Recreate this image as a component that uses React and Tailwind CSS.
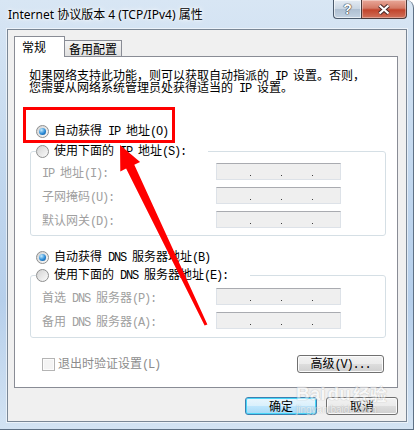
import React from 'react'

// ascii runs look like SimSun's half-width latin: a narrow mono face
function T({ s }) {
  return (
    <span>
      {s.split(/([\x20-\x7e]+)/).map((p, i) =>
        /^[\x20-\x7e]+$/.test(p)
          ? <span key={i} className="whitespace-pre font-['Liberation_Mono',monospace] text-[12px] tracking-[-1.2px]">{p}</span>
          : p
      )}
    </span>
  )
}

function Radio({ on }) {
  return (
    <span className="w-[13px] h-[13px] shrink-0 rounded-full border border-[#8e8f8f] bg-[linear-gradient(135deg,#d2d2d2,#fbfbfb)] flex items-center justify-center">
      {on && <span className="w-[7px] h-[7px] rounded-full bg-[radial-gradient(circle_at_35%_30%,#c6ebfd,#2b8bd6_55%,#0c4a8c)]" />}
    </span>
  )
}

function IpBox() {
  return (
    <div className="w-[125px] h-[17px] shrink-0 bg-[#efefef] border border-[#dde2e8] border-t-[#a9abb0] flex items-end pb-[3px] pl-[33px] gap-[30px]">
      <span className="w-[1px] h-[1px] bg-[#404040]" />
      <span className="w-[1px] h-[1px] bg-[#404040]" />
      <span className="w-[1px] h-[1px] bg-[#404040]" />
    </div>
  )
}

function Field({ label }) {
  return (
    <div className="flex items-center h-[17px]">
      <span className="w-[174px] pt-[2px] text-[#a0a0a0]"><T s={label} /></span>
      <IpBox />
    </div>
  )
}

const grayBtn = "rounded-[3px] border border-[#707070] bg-[linear-gradient(#f2f2f2_0%,#ebebeb_50%,#dddddd_51%,#cfcfcf_100%)] shadow-[inset_0_0_0_1px_#fbfbfb] flex items-center justify-center"

export default function App() {
  return (
    <div className="w-[414px] h-[430px] relative overflow-hidden flex flex-col pl-[7px] pr-[6px] pb-[7px] border-r border-b border-[#5f7185] rounded-tr-[8px] bg-[linear-gradient(#d8e6f4,#c0d6ee_45%,#b6cfeb_70%,#d3e3f3)] font-['Noto_Sans_CJK_SC',sans-serif] text-[12px] text-black">
      {/* title bar */}
      <div className="h-[29px] shrink-0 flex items-start">
        <div className="pl-[1px] pt-[7px] leading-[16px] font-['Noto_Sans','Noto_Sans_CJK_SC',sans-serif] [text-shadow:0_0_6px_#fff,0_0_3px_#fff]">
          Internet 协议版本 4 (TCP/IPv4) 属性
        </div>
        <div className="ml-auto flex">
          <div className="w-[28px] h-[19px] rounded-bl-[4px] border border-t-0 border-r-0 border-[#4b5a6c] bg-[linear-gradient(#e4ebf3,#c9d5e2_50%,#aebfd1_51%,#c3d2e2)] shadow-[inset_0_0_0_1px_rgba(255,255,255,0.6)] flex items-center justify-center">
            <span className="font-['Liberation_Sans',sans-serif] font-bold text-[14px] leading-[14px] text-white [text-shadow:0_0_1px_#333,0_0_1px_#333,0_0_1px_#333]">?</span>
          </div>
          <div className="w-[46px] h-[19px] rounded-br-[4px] border border-t-0 border-[#4b3a3a] bg-[linear-gradient(#e9a899,#d47a66_45%,#c2442c_55%,#d0715a)] shadow-[inset_0_0_0_1px_rgba(255,255,255,0.35)] flex items-center justify-center">
            <svg width="14" height="11" viewBox="0 0 14 11">
              <path d="M2.5 1.5 L11.5 9.5 M11.5 1.5 L2.5 9.5" stroke="#4a2b2b" strokeWidth="4.2" />
              <path d="M2.5 1.5 L11.5 9.5 M11.5 1.5 L2.5 9.5" stroke="#fff" strokeWidth="2.2" />
            </svg>
          </div>
        </div>
      </div>

      {/* client area */}
      <div className="flex-1 flex flex-col border border-[#7a8796] bg-[#f0f0f0] pl-[6px] pr-[8px] pt-[6px] shadow-[0_0_0_1px_rgba(255,255,255,0.55)]">
        <div className="flex items-end h-[20px]">
          <div className="relative z-10 -mb-px h-[21px] w-[51px] bg-white border border-b-0 border-[#898c95] pl-[7px] flex items-center">常规</div>
          <div className="h-[16px] w-[57px] border border-l-0 border-b-0 border-[#898c95] bg-[linear-gradient(#f4f4f4,#e0e0e0)] pl-[4px] flex items-center">备用配置</div>
        </div>

        <div className="w-[384px] h-[332px] shrink-0 bg-white border border-[#898c95] flex flex-col">
          <div className="pt-[12px] pl-[14px] leading-[12px]">
            <div className="h-[12px]"><T s="如果网络支持此功能，则可以获取自动指派的 IP 设置。否则，" /></div>
            <div className="h-[12px]"><T s="您需要从网络系统管理员处获得适当的 IP 设置。" /></div>
          </div>

          <div className="mt-[30px] ml-[21px] h-[16px] flex items-center gap-[5px]">
            <Radio on />
            <T s="自动获得 IP 地址(O)" />
          </div>

          <fieldset className="mt-[4px] ml-[15px] w-[356px] border border-[#d5dfe5] rounded-[3px] pb-[7px]">
            <legend className="ml-[5px] w-[172px]">
              <div className="h-[16px] flex items-center gap-[5px]">
                <Radio />
                <T s="使用下面的 IP 地址(S):" />
              </div>
            </legend>
            <div className="mt-[4px] pl-[11px] flex flex-col gap-[7px]">
              <Field label="IP 地址(I):" />
              <Field label="子网掩码(U):" />
              <Field label="默认网关(D):" />
            </div>
          </fieldset>

          <div className="mt-[13px] ml-[21px] h-[16px] flex items-center gap-[5px]">
            <Radio on />
            <T s="自动获得 DNS 服务器地址(B)" />
          </div>

          <fieldset className="mt-[2px] ml-[15px] w-[356px] border border-[#d5dfe5] rounded-[3px] pb-[8px]">
            <legend className="ml-[5px] w-[214px]">
              <div className="h-[16px] flex items-center gap-[5px]">
                <Radio />
                <T s="使用下面的 DNS 服务器地址(E):" />
              </div>
            </legend>
            <div className="mt-[5px] pl-[11px] flex flex-col gap-[7px]">
              <Field label="首选 DNS 服务器(P):" />
              <Field label="备用 DNS 服务器(A):" />
            </div>
          </fieldset>

          <div className="mt-[17px] h-[18px] flex items-center pl-[27px] pr-[13px]">
            <span className="w-[13px] h-[13px] border border-[#b4b4b4] bg-[#f4f4f4] shadow-[inset_0_0_0_1px_#fcfcfc]" />
            <span className="ml-[3px] text-[#8c8c8c]"><T s="退出时验证设置(L)" /></span>
            <div className={"ml-auto w-[87px] h-[18px] " + grayBtn}><T s="高级(V)..." /></div>
          </div>
        </div>

        <div className="mt-[9px] flex justify-end gap-[9px]">
          <div className="w-[72px] h-[18px] rounded-[3px] border border-[#3c7fb1] bg-[linear-gradient(#eaf6fd_0%,#d9f0fc_50%,#bee6fd_51%,#a7d9f5_100%)] shadow-[inset_0_0_0_1px_#48d6f8] flex items-center justify-center">确定</div>
          <div className={"w-[72px] h-[18px] " + grayBtn}>取消</div>
        </div>
      </div>

      {/* annotation: red box + arrow */}
      <div className="absolute left-[23px] top-[107px] w-[152px] h-[36px] border-[3px] border-[#ff0000]" />
      <svg className="absolute left-0 top-0 pointer-events-none" width="414" height="430" viewBox="0 0 414 430">
        <polygon points="120,145 140.1,162 134.3,164.8 207.4,324.4 204.6,325.6 126.1,168.6 120.3,171.4" fill="#ff0000" />
      </svg>

      {/* watermark */}
      <div className="absolute left-[296px] top-[384px] flex flex-col items-start opacity-50 pointer-events-none">
        <div className="flex items-end gap-[2px] font-['Liberation_Sans',sans-serif] font-bold text-[19px] leading-[20px] text-white [text-shadow:0_0_1px_#9a9a9a,0_0_1px_#9a9a9a]">
          <span>Bai</span><span>du</span><span className="font-['Noto_Sans_CJK_SC',sans-serif] text-[17px]">经验</span>
        </div>
        <div className="text-[10px] leading-[11px] text-white font-['Liberation_Sans',sans-serif] [text-shadow:0_0_1px_#9a9a9a,0_0_1px_#9a9a9a]">jingyan.baidu.com</div>
      </div>
    </div>
  )
}
